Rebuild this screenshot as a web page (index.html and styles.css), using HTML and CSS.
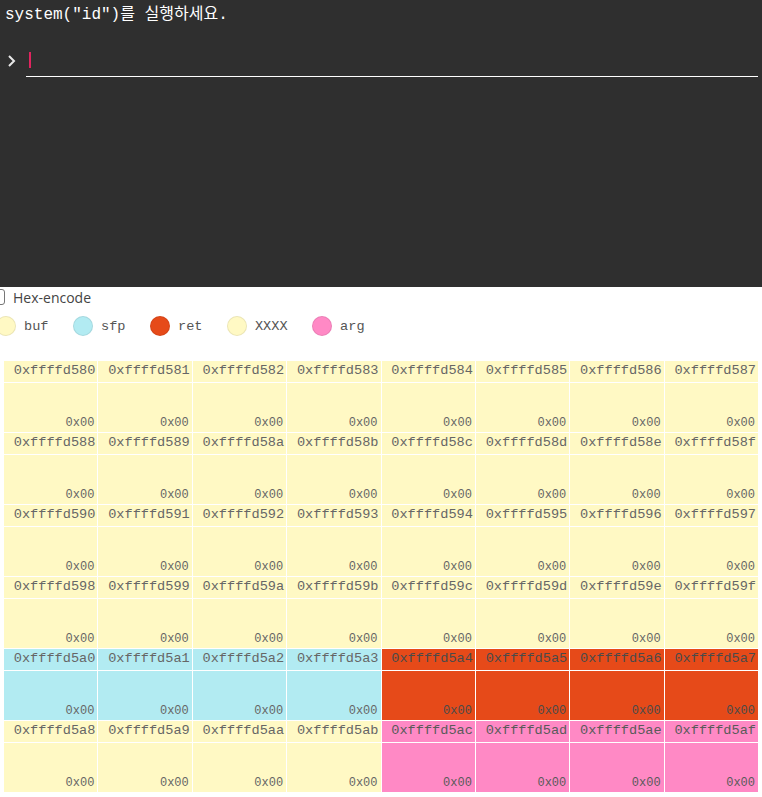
FILE: index.html
```html
<!DOCTYPE html>
<html lang="ko">
<head>
<meta charset="utf-8">
<title>Stack</title>
<link rel="stylesheet" href="styles.css">
</head>
<body>
<div class="terminal">
  <div class="output">system("id")를 실행하세요.</div>
  <div class="prompt-row">
    <span class="chev"><svg width="10" height="12" viewBox="0 0 10 12"><path d="M2 1 L7 6 L2 11" fill="none" stroke="#e8e8e8" stroke-width="2"/></svg></span>
    <div class="input"><span class="cursor"></span></div>
  </div>
</div>
<div class="controls">
  <label class="hex-row"><span class="checkbox"></span><span>Hex-encode</span></label>
  <div class="legend">
    <div class="item"><span class="dot buf"></span><span>buf</span></div>
    <div class="item"><span class="dot sfp"></span><span>sfp</span></div>
    <div class="item"><span class="dot ret"></span><span>ret</span></div>
    <div class="item"><span class="dot buf"></span><span>XXXX</span></div>
    <div class="item"><span class="dot arg"></span><span>arg</span></div>
  </div>
  <div class="grid" id="grid"></div>
</div>
<script src="app.js"></script>
</body>
</html>
```

FILE: styles.css
```css
html, body { margin: 0; padding: 0; background: #fff; }
.terminal {
  background: #2f2f2f;
  height: 287px;
  box-sizing: border-box;
  padding: 6px 4px 0 5px;
}
.output {
  font-family: "Liberation Mono", "Noto Sans CJK KR", monospace;
  font-size: 16px;
  line-height: 18px;
  color: #fff;
  height: 18px;
  white-space: nowrap;
}
.prompt-row {
  display: flex;
  align-items: center;
  height: 32px;
  margin-top: 21px;
}
.chev {
  width: 21px;
  display: flex;
  align-items: center;
  padding-left: 2px;
  box-sizing: border-box;
}
.chev svg { display: block; }
.input {
  flex: 1;
  height: 32px;
  box-sizing: border-box;
  border-bottom: 1px solid #fff;
  display: flex;
  align-items: center;
}
.cursor {
  display: block;
  width: 1.5px;
  height: 16px;
  margin-left: 3px;
  margin-top: -1px;
  background: #e0245e;
}
.controls { padding-top: 0; }
.hex-row {
  display: flex;
  align-items: center;
  height: 20px;
  margin-left: -9px;
  font-family: "Open Sans", "Noto Sans", sans-serif;
  font-size: 14px;
  color: #444;
  gap: 8px;
}
.checkbox {
  width: 12px;
  height: 14px;
  border: 1px solid #767676;
  border-radius: 3px;
  background: #fff;
}
.legend {
  display: flex;
  align-items: center;
  height: 20px;
  margin-top: 9px;
  margin-left: -4px;
  gap: 24.5px;
  font-family: "Liberation Mono", monospace;
  font-size: 13.6px;
  color: #555;
}
.item { display: flex; align-items: center; gap: 8px; }
.dot {
  width: 20px;
  height: 20px;
  border-radius: 50%;
  box-sizing: border-box;
  border: 1px solid rgba(0,0,0,0.08);
}
.buf { background: #fff9c4; }
.sfp { background: #b2ebf2; }
.ret { background: #e64a19; }
.arg { background: #ff89c5; }
.grid {
  margin: 25px 0 0 4px;
  width: 754px;
  display: grid;
  grid-template-columns: repeat(8, 1fr);
  column-gap: 1px;
  row-gap: 1px;
  background: #fff;
}
.cell {
  display: flex;
  flex-direction: column;
  gap: 1px;
  font-family: "Liberation Mono", monospace;
  color: #666;
  background: #fff;
}
.addr {
  height: 21px;
  line-height: 20px;
  font-size: 13.6px;
  text-align: right;
  padding-right: 2px;
  white-space: nowrap;
}
.val {
  height: 49px;
  box-sizing: border-box;
  font-size: 12px;
  line-height: 14px;
  padding: 0 3px 2px 0;
  display: flex;
  align-items: flex-end;
  justify-content: flex-end;
}
.cell.buf .addr, .cell.buf .val { background: #fff9c4; }
.cell.sfp .addr, .cell.sfp .val { background: #b2ebf2; }
.cell.ret .addr, .cell.ret .val { background: #e64a19; color: #4a4a4a; }
.cell.arg .addr, .cell.arg .val { background: #ff89c5; color: #5a5a5a; }
.cell.buf, .cell.sfp, .cell.ret, .cell.arg { background: #fff; }
```

FILE: app.js
```js
(function () {
  var grid = document.getElementById('grid');
  var base = 0xffffd580;
  for (var i = 0; i < 48; i++) {
    var kind = 'buf';
    if (i >= 32 && i < 36) kind = 'sfp';
    else if (i >= 36 && i < 40) kind = 'ret';
    else if (i >= 44) kind = 'arg';
    var cell = document.createElement('div');
    cell.className = 'cell ' + kind;
    var a = document.createElement('div');
    a.className = 'addr';
    a.textContent = '0x' + (base + i).toString(16);
    var v = document.createElement('div');
    v.className = 'val';
    v.textContent = '0x00';
    cell.appendChild(a);
    cell.appendChild(v);
    grid.appendChild(cell);
  }
})();
```
